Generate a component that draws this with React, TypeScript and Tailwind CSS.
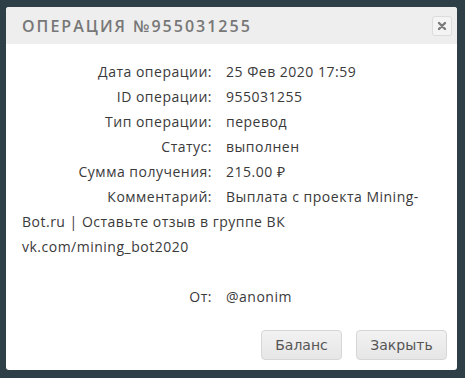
import React from 'react';

const rows = [
  { label: 'Дата операции:', value: '25 Фев 2020 17:59' },
  { label: 'ID операции:', value: '955031255' },
  { label: 'Тип операции:', value: 'перевод' },
  { label: 'Статус:', value: 'выполнен' },
  { label: 'Сумма получения:', value: '215.00 ₽' },
  {
    label: 'Комментарий:',
    value: 'Выплата с проекта Mining-Bot.ru | Оставьте отзыв в группе ВК vk.com/mining_bot2020',
  },
];

function Row({ label, value }: { label: string; value: string }) {
  return (
    <div className="leading-[25px]">
      <span className="inline-block w-[190px] text-right mr-[14px]">{label}</span>
      {value}
    </div>
  );
}

export default function App(): React.ReactElement {
  return (
    <main className="h-[378px] w-[465px] bg-[#2e3f47] pt-[7px] pl-[6px] font-['Open_Sans',sans-serif]">
      <div className="w-[451px] h-[363px] bg-white rounded-[3px] overflow-hidden flex flex-col">
        {/* header */}
        <div className="h-[37px] bg-[#eeeeee] flex items-center justify-between pl-4 pr-[5px]">
          <h1 className="text-[16px] font-semibold tracking-[2px] text-[#777777] uppercase">
            Операция №955031255
          </h1>
          <button className="w-[20px] h-[20px] rounded-[3px] border border-[#dcdcdc] bg-[#f4f4f4] flex items-center justify-center">
            <svg width="10" height="10" viewBox="0 0 10 10">
              <path d="M2 2 L8 8 M8 2 L2 8" stroke="#7a7a7a" strokeWidth="2.4" strokeLinecap="round" />
            </svg>
          </button>
        </div>

        {/* body */}
        <div className="flex-1 pt-[15px] pl-4 pr-4 text-[14px] tracking-[0.5px] text-[#3a3a3a]">
          {rows.map((r) => (
            <Row key={r.label} label={r.label} value={r.value} />
          ))}
          <div className="h-[25px]" />
          <Row label="От:" value="@anonim" />
        </div>

        {/* footer */}
        <div className="flex justify-end gap-[14px] pr-[10px] pb-[10px] font-['DejaVu_Sans',sans-serif]">
          <button className="w-[81px] h-[30px] rounded-[4px] border border-[#d6d6d6] bg-gradient-to-b from-[#f2f2f2] to-[#e6e6e6] text-[14px] text-[#555555]">
            Баланс
          </button>
          <button className="w-[91px] h-[30px] rounded-[4px] border border-[#d6d6d6] bg-gradient-to-b from-[#f2f2f2] to-[#e6e6e6] text-[14px] text-[#555555]">
            Закрыть
          </button>
        </div>
      </div>
    </main>
  );
}
